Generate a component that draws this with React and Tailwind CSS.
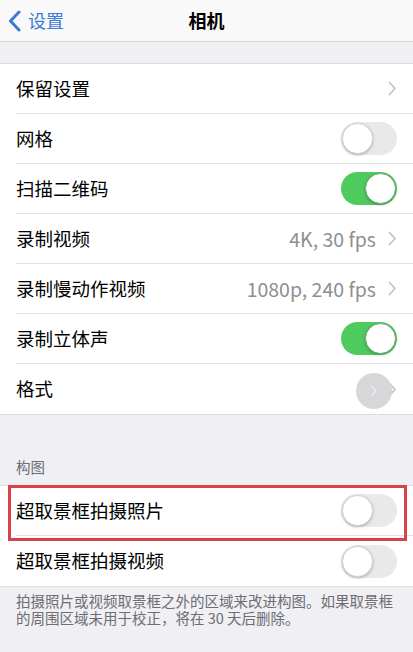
import { useState } from "react";

const FONT = { fontFamily: '"Noto Sans CJK SC", "Noto Sans", sans-serif' };

function Chevron() {
  return (
    <svg width="9" height="15" viewBox="0 0 9 15" className="shrink-0">
      <path d="M1.5 1.5 L7 7.5 L1.5 13.5" fill="none" stroke="#c4c4c7" strokeWidth="1.8" strokeLinecap="round" strokeLinejoin="round" />
    </svg>
  );
}

function Toggle({ on }) {
  return (
    <div
      className={`relative h-[33px] w-[56px] rounded-full ${on ? "bg-[#4fcb5e]" : "bg-[#e9e9eb]"}`}
    >
      <div
        className={`absolute top-[1px] h-[31px] w-[31px] rounded-full bg-white shadow-[0_1px_3px_rgba(0,0,0,0.25)] ${
          on ? "right-[1px] border border-[#6fa878]" : "left-[1px] border border-[#d6d6d6]"
        }`}
      />
    </div>
  );
}

function Row({ label, value, chevron, toggle, last, children }) {
  return (
    <div className="relative flex h-[50px] items-center pl-4">
      <div className={`flex h-full flex-1 items-center pr-4 ${last ? "" : "border-b border-[#e1e1e4]"}`}>
        <span className="flex-1 text-[18.5px] text-black">{label}</span>
        {value && <span className="mr-[12px] text-[19.5px] text-[#8e8e93]">{value}</span>}
        {chevron && <Chevron />}
        {toggle !== undefined && <Toggle on={toggle} />}
      </div>
      {children}
    </div>
  );
}

export default function App() {
  const [rows] = useState([
    { label: "保留设置", chevron: true },
    { label: "网格", toggle: false },
    { label: "扫描二维码", toggle: true },
    { label: "录制视频", value: "4K, 30 fps", chevron: true },
    { label: "录制慢动作视频", value: "1080p, 240 fps", chevron: true },
    { label: "录制立体声", toggle: true },
  ]);

  return (
    <div className="h-[652px] w-[413px] overflow-hidden bg-[#efeff4]" style={FONT}>
      {/* Nav bar */}
      <div className="relative flex h-[42px] items-center justify-center border-b border-[#d6d6da] bg-[#f9f9f9]">
        <div className="absolute left-[8px] top-0 flex h-full items-center">
          <svg width="13" height="22" viewBox="0 0 13 22">
            <path d="M11 2 L2.5 11 L11 20" fill="none" stroke="#3b7ad6" strokeWidth="3" strokeLinecap="round" strokeLinejoin="round" />
          </svg>
          <span className="ml-[7px] text-[18px] text-[#3b7ad6]">设置</span>
        </div>
        <span className="text-[18px] font-semibold text-black">相机</span>
      </div>

      <div className="h-[21px]" />

      {/* Section 1 */}
      <div className="border-y border-[#dcdce0] bg-white">
        {rows.map((r) => (
          <Row key={r.label} {...r} />
        ))}
        <Row label="格式" chevron last>
          <div className="absolute left-[356px] top-[9px] flex h-[36px] w-[36px] items-center justify-center rounded-full bg-[#d7d7d9]">
            <svg width="8" height="12" viewBox="0 0 8 12">
              <path d="M2 1.5 L6 6 L2 10.5" fill="none" stroke="#ececee" strokeWidth="1.4" strokeLinecap="round" />
            </svg>
          </div>
        </Row>
      </div>

      {/* Section 2 header */}
      <div className="flex h-[70px] items-end px-4 pb-[7px]">
        <span className="text-[14.5px] text-[#6d6d72]">构图</span>
      </div>

      {/* Section 2 */}
      <div className="relative border-y border-[#dcdce0] bg-white">
        <Row label="超取景框拍摄照片" toggle={false} />
        <Row label="超取景框拍摄视频" toggle={false} last />
        <div className="pointer-events-none absolute left-[8px] top-[-1px] h-[56px] w-[399px] border-[3px] border-[#d9414b]" />
      </div>

      {/* Footer */}
      <p className="px-4 pt-[5px] text-[14.5px] leading-[17px] text-[#6d6d72]">
        拍摄照片或视频取景框之外的区域来改进构图。如果取景框的周围区域未用于校正，将在 30 天后删除。
      </p>
    </div>
  );
}
